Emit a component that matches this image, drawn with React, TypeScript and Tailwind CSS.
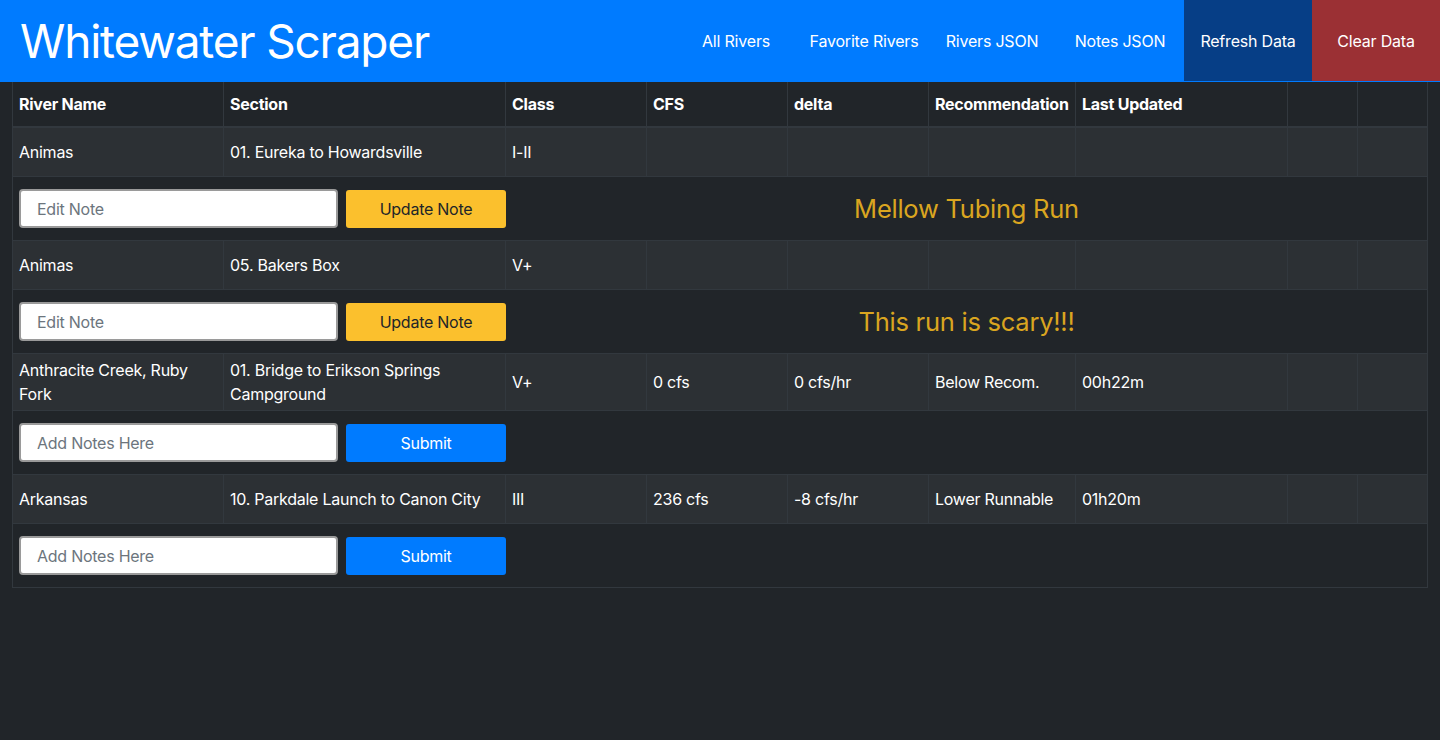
import { useState } from 'react';

const navLinks = ['All Rivers', 'Favorite Rivers', 'Rivers JSON', 'Notes JSON'];

const columns = ['River Name', 'Section', 'Class', 'CFS', 'delta', 'Recommendation', 'Last Updated', '', ''];

const gridCols = 'grid grid-cols-[210px_282px_141px_141px_141px_147px_212px_70px_70px]';

interface River {
  name: string;
  section: string;
  grade: string;
  cfs: string;
  delta: string;
  rec: string;
  updated: string;
  note?: string;
  tall?: boolean;
}

const rivers: River[] = [
  { name: 'Animas', section: '01. Eureka to Howardsville', grade: 'I-II', cfs: '', delta: '', rec: '', updated: '', note: 'Mellow Tubing Run' },
  { name: 'Animas', section: '05. Bakers Box', grade: 'V+', cfs: '', delta: '', rec: '', updated: '', note: 'This run is scary!!!' },
  {
    name: 'Anthracite Creek, Ruby Fork',
    section: '01. Bridge to Erikson Springs Campground',
    grade: 'V+',
    cfs: '0 cfs',
    delta: '0 cfs/hr',
    rec: 'Below Recom.',
    updated: '00h22m',
    tall: true,
  },
  {
    name: 'Arkansas',
    section: '10. Parkdale Launch to Canon City',
    grade: 'III',
    cfs: '236 cfs',
    delta: '-8 cfs/hr',
    rec: 'Lower Runnable',
    updated: '01h20m',
  },
];

function NoteRow({ note }: { note?: string }) {
  const [text, setText] = useState('');
  return (
    <div className="flex h-[64px] items-center border-b border-[#32383e] pl-[6px]">
      <input
        value={text}
        onChange={(e) => setText(e.target.value)}
        placeholder={note ? 'Edit Note' : 'Add Notes Here'}
        className="h-[39px] w-[319px] rounded-[4px] border-2 border-[#9a9a9a] bg-white pl-[16px] text-[16px] text-[#212529] placeholder:text-[#6c757d] outline-none"
      />
      {note ? (
        <button className="ml-[8px] h-[38px] w-[160px] rounded-[3px] bg-[#fbc02d] text-[16px] text-[#212529]">
          Update Note
        </button>
      ) : (
        <button className="ml-[8px] h-[38px] w-[160px] rounded-[3px] bg-[#007bff] text-[16px] text-white">Submit</button>
      )}
      <div className="flex-1 pt-[2px] text-center text-[25.5px] text-[#daa520]">{note}</div>
    </div>
  );
}

export default function App() {
  return (
    <div className="min-h-screen bg-[#212529] font-['Inter',sans-serif] text-white">
      {/* Navbar */}
      <header className="flex h-[82px] items-start justify-between border-b border-[#007bff] bg-[#007bff]">
        <h1 className="pl-[20px] pt-[14px] text-[46px] leading-[54px] tracking-[-1.2px]">Whitewater Scraper</h1>
        <nav className="flex text-[16px] tracking-[-0.2px]">
          {navLinks.map((link) => (
            <a key={link} className="flex h-[81px] w-[128px] items-center justify-center">
              {link}
            </a>
          ))}
          <a className="flex h-[81px] w-[128px] items-center justify-center bg-[#063e86]">Refresh Data</a>
          <a className="flex h-[81px] w-[128px] items-center justify-center bg-[#9b3034]">Clear Data</a>
        </nav>
      </header>

      {/* Rivers table */}
      <div className="ml-[12px] w-[1416px] border-x border-[#32383e] text-[16px] tracking-[-0.25px]">
        <div className={`${gridCols} h-[46px] border-b-2 border-[#32383e] font-bold`}>
          {columns.map((col, i) => (
            <div key={i} className={`flex items-center px-[6px] ${i > 0 ? 'border-l border-[#32383e]' : ''}`}>
              {col}
            </div>
          ))}
        </div>
        {rivers.map((r, idx) => {
          const cells = [r.name, r.section, r.grade, r.cfs, r.delta, r.rec, r.updated, '', ''];
          return (
            <div key={idx}>
              <div className={`${gridCols} ${r.tall ? 'h-[57px]' : 'h-[49px]'} border-b border-[#32383e] bg-[#2c3034]`}>
                {cells.map((c, i) => (
                  <div
                    key={i}
                    className={`flex items-center px-[6px] leading-[24px] ${i > 0 ? 'border-l border-[#32383e]' : ''}`}
                  >
                    {c}
                  </div>
                ))}
              </div>
              <NoteRow note={r.note} />
            </div>
          );
        })}
      </div>
    </div>
  );
}
